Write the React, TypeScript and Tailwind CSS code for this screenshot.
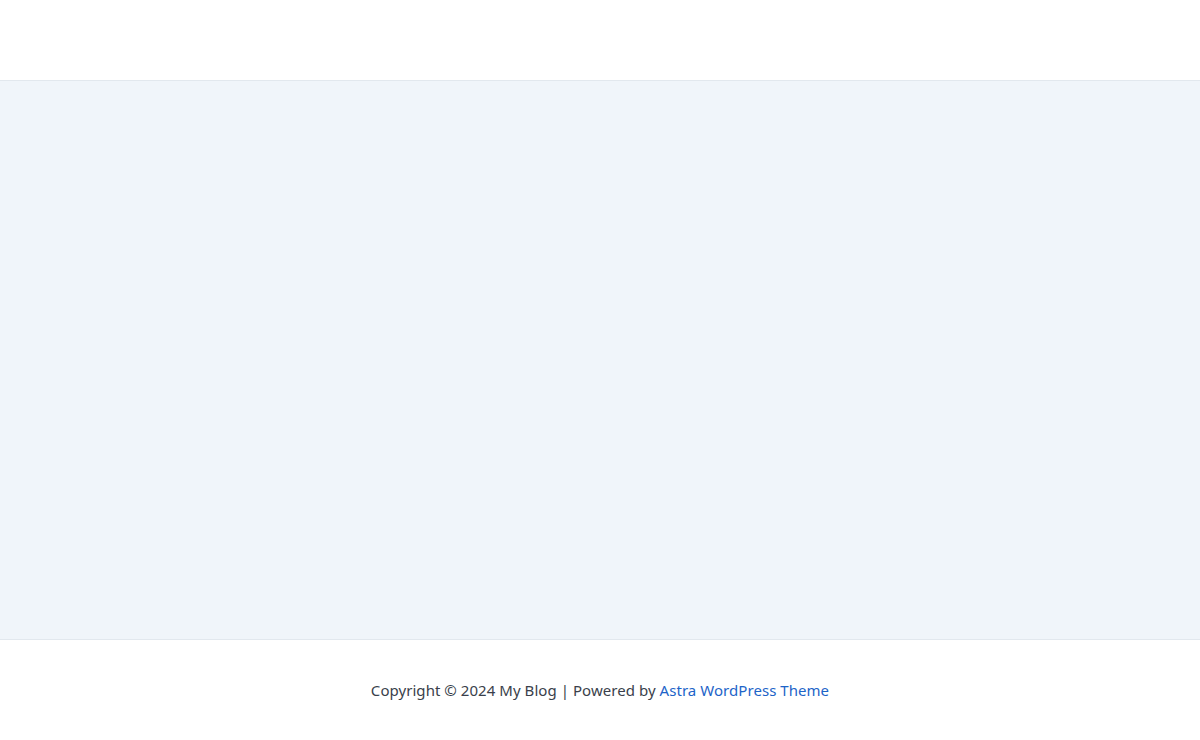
export default function App() {
  return (
    <div className="flex h-[740px] w-full flex-col bg-white font-['Noto_Sans',sans-serif]">
      <header className="h-[80px] shrink-0 bg-white" />
      <main className="h-[560px] shrink-0 border-y border-[#e2e8ee] bg-[#f0f5fa]" />
      <footer className="flex flex-1 items-center justify-center bg-white text-[15px] text-[#3a3f4b]">
        <p className="tracking-[0.05px]">
          Copyright © 2024 My Blog | Powered by{" "}
          <a href="#" className="text-[#1d64c8]">
            Astra WordPress Theme
          </a>
        </p>
      </footer>
    </div>
  );
}
